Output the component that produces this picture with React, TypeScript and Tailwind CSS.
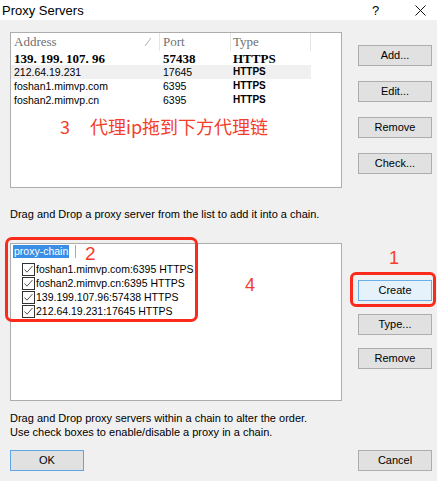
import React from "react";

const ui = { fontFamily: '"Liberation Sans", Arial, sans-serif' };
const serif = { fontFamily: '"Liberation Serif", "DejaVu Serif", serif' };
const cjk = { fontFamily: '"Noto Sans CJK SC", "Noto Sans", sans-serif' };

function Btn({ label, variant = "normal" }: { label: string; variant?: "normal" | "focus" | "default" }) {
  const cls =
    variant === "focus"
      ? "bg-[#e5f1fb] border-[#6aaee6]"
      : variant === "default"
      ? "bg-[#e1e1e1] border-[#5ea4e6]"
      : "bg-[#e1e1e1] border-[#adadad]";
  return (
    <div
      className={`w-[74px] h-[21px] border flex items-center justify-center text-[11px] text-black leading-none ${cls}`}
      style={ui}
    >
      {label}
    </div>
  );
}

function Check() {
  return (
    <svg width="13" height="13" viewBox="0 0 13 13" className="shrink-0">
      <rect x="0.5" y="0.5" width="12" height="12" fill="white" stroke="#333" />
      <path d="M2.5 6.5 L5 9.2 L10.5 3" fill="none" stroke="#555" strokeWidth="1" />
    </svg>
  );
}

export default function App() {
  const rows = [
    { a: "139. 199. 107. 96", p: "57438", t: "HTTPS", serif: true, sel: false },
    { a: "212.64.19.231", p: "17645", t: "HTTPS", serif: false, sel: true },
    { a: "foshan1.mimvp.com", p: "6395", t: "HTTPS", serif: false, sel: false },
    { a: "foshan2.mimvp.cn", p: "6395", t: "HTTPS", serif: false, sel: false },
  ];
  const chain = [
    "foshan1.mimvp.com:6395 HTTPS",
    "foshan2.mimvp.cn:6395 HTTPS",
    "139.199.107.96:57438 HTTPS",
    "212.64.19.231:17645 HTTPS",
  ];
  return (
    <div className="w-[437px] h-[481px] bg-[#f0f0f0] flex flex-col overflow-hidden text-black relative" style={ui}>
      {/* Title bar */}
      <div className="h-[20px] bg-white flex items-center shrink-0 relative">
        <span className="ml-[2px] text-[13px] leading-none" style={ui}>Proxy Servers</span>
        <span className="absolute left-[372px] top-[4px] text-[13px] leading-none" style={ui}>?</span>
        <svg className="absolute left-[415px] top-[5px]" width="11" height="11" viewBox="0 0 11 11">
          <path d="M0.5 0.5 L10.5 10.5 M10.5 0.5 L0.5 10.5" stroke="#111" strokeWidth="1" />
        </svg>
      </div>

      {/* Top section */}
      <div className="flex mt-[12px] ml-[10px]">
        <div className="w-[332px] h-[156px] bg-white border border-[#adadad] relative">
          {/* header */}
          <div className="flex h-[18px] items-center text-[13px] text-[#707070]" style={serif}>
            <div className="w-[149px] h-full border-r border-[#e5e5e5] flex items-center pl-[3px] relative">
              Address
              <svg className="absolute left-[133px] top-[4px]" width="8" height="10" viewBox="0 0 8 10">
                <path d="M1 9 L7 1" stroke="#b0b0b0" strokeWidth="1" />
              </svg>
            </div>
            <div className="w-[71px] h-full border-r border-[#e5e5e5] flex items-center pl-[3px]">Port</div>
            <div className="w-[80px] h-full border-r border-[#e5e5e5] flex items-center pl-[2px]">Type</div>
          </div>
          {rows.map((r) => (
            <div key={r.a} className={`flex h-[14px] items-center w-[300px] ${r.sel ? "bg-[#f0f0f0]" : ""}`}>
              <div
                className={`w-[149px] pl-[3px] leading-none ${r.serif ? "text-[13px] font-bold" : "text-[10.5px]"}`}
                style={r.serif ? serif : ui}
              >
                {r.a}
              </div>
              <div
                className={`w-[71px] pl-[3px] leading-none ${r.serif ? "text-[13px] font-bold" : "text-[10.5px]"}`}
                style={r.serif ? serif : ui}
              >
                {r.p}
              </div>
              <div
                className={`w-[80px] pl-[2px] leading-none ${r.serif ? "text-[13px] font-bold" : "text-[10px] font-bold"}`}
                style={r.serif ? serif : ui}
              >
                {r.t}
              </div>
            </div>
          ))}
          <div className="absolute left-[49px] top-[84px] text-[18px] leading-none text-[#f43e2b] flex" style={cjk}>
            <span>3</span>
            <span className="ml-[20px]">代理ip拖到下方代理链</span>
          </div>
        </div>
        <div className="flex flex-col gap-[15px] ml-[16px] mt-[13px]">
          <Btn label="Add..." />
          <Btn label="Edit..." />
          <Btn label="Remove" />
          <Btn label="Check..." />
        </div>
      </div>

      <div className="mt-[18px] ml-[10px] h-[16px] text-[11px] leading-[16px]" style={ui}>
        Drag and Drop a proxy server from the list to add it into a chain.
      </div>

      {/* Chain section */}
      <div className="flex mt-[21px] ml-[10px]">
        <div className="w-[332px] h-[158px] bg-white border border-[#adadad] relative">
          <div className="flex items-center mt-[1px] ml-[2px] h-[13px]">
            <div className="h-[13px] border-r border-[#aaa] pr-[6px] flex items-center">
              <span className="bg-[#3a8ee6] text-white text-[10.5px] leading-[13px] px-[1px]" style={ui}>proxy-chain</span>
            </div>
          </div>
          <div className="flex flex-col mt-[4px]">
            {chain.map((c) => (
              <div key={c} className="flex items-center h-[14px] pl-[11px]">
                <Check />
                <span className="ml-[1px] text-[10.5px] leading-none" style={ui}>{c}</span>
              </div>
            ))}
          </div>
          <span className="absolute left-[74px] top-[0px] text-[19px] leading-none text-[#f43e2b]" style={ui}>2</span>
          <span className="absolute left-[234px] top-[32px] text-[18px] leading-none text-[#f43e2b]" style={ui}>4</span>
        </div>
        <div className="flex flex-col ml-[16px] mt-[37px] gap-[13px] relative">
          <span className="absolute left-[31px] top-[-31px] text-[18px] leading-none text-[#f43e2b]" style={ui}>1</span>
          <div className="absolute left-[-8px] top-[-8px] w-[86px] h-[35px] border-[3px] border-[#fb2b1c] rounded-[6px]" />
          <Btn label="Create" variant="focus" />
          <Btn label="Type..." />
          <Btn label="Remove" />
        </div>
      </div>

      <div className="mt-[10px] ml-[10px] text-[11px] leading-[14px]" style={ui}>
        <div>Drag and Drop proxy servers within a chain to alter the order.</div>
        <div>Use check boxes to enable/disable a proxy in a chain.</div>
      </div>

      <div className="flex justify-between mt-[11px] ml-[10px] mr-[5px]">
        <Btn label="OK" variant="default" />
        <Btn label="Cancel" />
      </div>

      {/* red annotation around chain */}
      <div className="absolute left-[5px] top-[237px] w-[193px] h-[85px] border-[3px] border-[#fb2b1c] rounded-[7px] pointer-events-none" />
    </div>
  );
}
